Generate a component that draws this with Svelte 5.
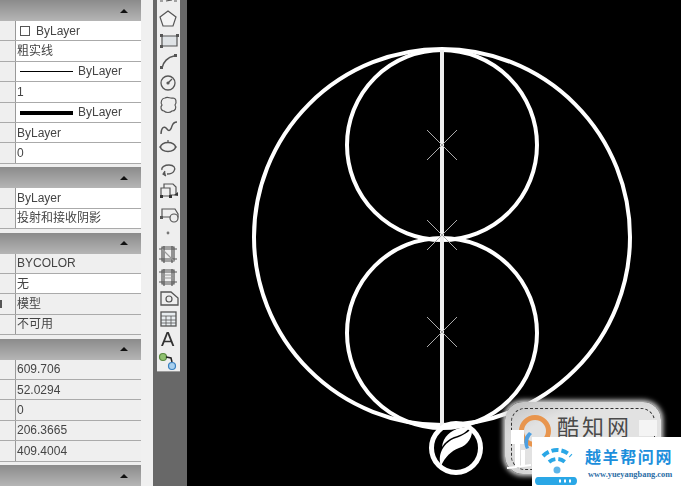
<script>
  const groups = [
    { rows: [
      { swatch: true, text: "ByLayer" },
      { text: "粗实线" },
      { line: 1, text: "ByLayer" },
      { text: "1" },
      { line: 4, text: "ByLayer" },
      { text: "ByLayer" },
      { text: "0" }
    ] },
    { rows: [{ text: "ByLayer" }, { text: "投射和接收阴影" }] },
    { rows: [
      { text: "BYCOLOR", grey: true },
      { text: "无" },
      { text: "模型", grey: true, mark: true },
      { text: "不可用", grey: true }
    ] },
    { rows: [
      { text: "609.706", grey: true },
      { text: "52.0294", grey: true },
      { text: "0", grey: true },
      { text: "206.3665", grey: true },
      { text: "409.4004", grey: true }
    ] },
    { rows: [] }
  ];
  const crosses = [[442, 145], [442, 235], [442, 332]];
</script>

<div class="screen">
  <aside class="palette">
    {#each groups as group}
      <section class="group">
        <header><span class="arrow"></span></header>
        {#each group.rows as row}
          <div class="row" class:grey={row.grey}>
            <div class="name">{#if row.mark}<i></i>{/if}</div>
            <div class="value">
              {#if row.swatch}<span class="swatch"></span>{/if}
              {#if row.line}<span class="sample" style:height="{row.line}px"></span>{/if}
              <span>{row.text}</span>
            </div>
          </div>
        {/each}
      </section>
    {/each}
  </aside>

  <div class="gutter"></div>

  <div class="dock">
    <nav class="toolbar">
      <svg width="22" height="372" viewBox="0 0 22 372" fill="none" stroke="#555" stroke-width="1.2">
        <path d="M3 1h3M9 1l6-1M17 1h3" />
        <polygon points="11,11 19,17 16,26 6,26 3,17" fill="#f4f4f4" />
        <path d="M5 36h15v10H5z" fill="#dfe3e6" /><path d="M3 34h3v3H3zM19 34h3v3h-3zM3 45h3v3H3z" fill="#555" stroke="none" />
        <path d="M5 68c1-6 6-11 12-12" stroke-width="1.5" /><path d="M3 66h3v3H3zM17 54h3v3h-3z" fill="#555" stroke="none" />
        <circle cx="11" cy="83" r="7" stroke-width="1.3" /><path d="M11 83l4-4" /><circle cx="11" cy="83" r="1" fill="#555" />
        <path d="M8 98c3-2 5 1 8 0 3 0 4 4 2 7 2 3 0 6-3 6-2 2-6 2-8 0-3 0-4-4-2-6-2-3 0-7 3-7z" />
        <path d="M4 134c0-6 3-9 6-5 2 3 4 1 5-3 1-3 3-4 5-4" stroke-width="1.4" />
        <ellipse cx="11" cy="147" rx="7.5" ry="4.5" stroke-width="1.5" /><path d="M2 147h2M18 147h2M11 142v-2" />
        <path d="M5 170c-1-3 3-5 7-5 5 0 7 3 5 6-1 2-4 3-7 3" stroke-width="1.3" /><path d="M8 171l-2 3 3 2" fill="#555" />
        <path d="M7 184h9l3 3v8H7z" /><path d="M4 188h9v8H4z" fill="#eee" /><path d="M3 195h3v3H3zM12 195h3v3h-3zM17 195l4-3v4z" fill="#333" stroke="none" />
        <path d="M5 209h13l3 5v3H5z" /><circle cx="17" cy="218" r="4" fill="#eee" /><path d="M3 216h3v3H3z" fill="#555" stroke="none" />
        <circle cx="11" cy="233" r="1.4" fill="#777" stroke="none" />
        <path d="M5 247h12v14H5zM2 249h18M2 259h18M7 246v17M15 246v17" /><path d="M5 249l12 12" stroke="#999" />
        <path d="M5 270h12v14H5zM2 272h18M2 282h18M7 269v17M15 269v17" /><path d="M5 275h12M5 278h12" stroke="#999" />
        <path d="M4 292h10l7 6v7H4z" stroke-width="1.3" /><circle cx="12" cy="299" r="3" />
        <rect x="4" y="312" width="15" height="14" fill="#e8edf0" stroke-width="1.3" /><path d="M4 316h15M4 320h15M4 323h15M9 316v10M14 316v10" stroke-width=".8" />
        <circle cx="6" cy="357" r="3.5" fill="#8fc06f" stroke="#5a8a40" /><path d="M9 357l5 1 1 4" stroke="#222" stroke-width="1.5" /><circle cx="15" cy="366" r="3.5" fill="#a9d0ee" stroke="#3a80c0" />
      </svg>
      <span class="glyph">A</span>
    </nav>
  </div>

  <main class="canvas">
    <svg width="494" height="486" viewBox="187 0 494 486" fill="none" stroke="#fff">
      <circle cx="442" cy="237" r="188" stroke-width="4" />
      <circle cx="442" cy="145" r="95" stroke-width="4" />
      <circle cx="442" cy="333" r="95" stroke-width="4" />
      <path d="M442 50v380" stroke="#eee" stroke-width="4" />
      {#each crosses as [x, y]}
        <path d="M{x - 15} {y - 15}l30 30M{x + 15} {y - 15}l-30 30" stroke="#aaa" stroke-width="1" />
      {/each}
      <circle cx="456" cy="448" r="24.5" stroke-width="5" />
      <path d="M441 466c-4-12 3-24 15-28 6-2 13-6 16-10 1 9-4 17-13 20-8 3-14 9-18 18z" fill="#fff" stroke="none" />
      <path d="M442 447c1-10 9-17 18-19 4-1 8-1 11-3-3 7-10 10-17 12-5 2-9 5-12 10z" fill="#fff" stroke="none" />
    </svg>

    <div class="stamp">
      <div class="stitch"></div>
      <span class="ring"></span>
      <span class="stamp-text">酷知网</span>
      <span class="stamp-cell"></span>
      <svg class="stamp-marks" width="40" height="50" viewBox="0 0 40 50" fill="#fff">
        <path d="M4 0h13v14H4zM8 14h5v23H8zM14 20h4v16h-4zM0 37l24-3v2L0 39z" />
        <path d="M22 2c-5 4-6 11-3 17l3-1c-2-5-1-10 3-14z" fill="#4d9fe0" />
      </svg>
    </div>

    <div class="brand">
      <svg class="brand-logo" width="42" height="46" viewBox="0 0 42 46" fill="none">
        <path d="M8 16c8-8 20-8 28 0M14 22c5-4 11-4 16 0" stroke="#2aa7e6" stroke-width="4" stroke-dasharray="7 3" />
        <circle cx="22" cy="30" r="3.5" fill="#5cb4e8" />
        <path d="M3 37h36c2 0 3 2 3 4s-1 4-3 4H3c-2 0-3-2-3-4s1-4 3-4z" fill="#2aa7e6" />
        <path d="M24 41h2M29 41h2M34 41h2" stroke="#fff" stroke-width="3" />
      </svg>
      <div class="brand-text">
        <div class="brand-name">越羊帮问网</div>
        <div class="brand-url">www.yueyangbang.com</div>
      </div>
    </div>
  </main>
</div>

<style>
  :global(body) {
    background: #000;
  }

  .screen {
    display: flex;
    width: 681px;
    height: 486px;
    overflow: hidden;
    font-family: "Liberation Sans", "Noto Sans CJK SC", sans-serif;
  }

  .palette {
    flex: none;
    width: 141px;
    display: flex;
    flex-direction: column;
    gap: 3.5px;
    background: #efefef;
    filter: blur(0.4px);
  }

  header {
    height: 21px;
    display: flex;
    align-items: center;
    justify-content: flex-end;
    padding-right: 13px;
    background: linear-gradient(#8b8b8b, #b5b5b5);
  }

  .arrow {
    width: 0;
    height: 0;
    border: 4px solid transparent;
    border-top: 0;
    border-bottom: 4px solid #111;
  }

  .row {
    height: 20.4px;
    display: flex;
    background: #fff;
    border-bottom: 1.5px solid #aaa;
    box-sizing: border-box;
    font-size: 12px;
    line-height: 19px;
    color: #444;
  }

  .row.grey {
    background: #efefef;
  }

  .name {
    width: 15px;
    background: #efefef;
    border-right: 1px solid #999;
    position: relative;
  }

  .name i {
    position: absolute;
    left: 0;
    top: 6px;
    width: 2px;
    height: 8px;
    background: #555;
  }

  .value {
    flex: 1;
    display: flex;
    align-items: center;
    padding: 1px 0 0 1px;
    white-space: nowrap;
  }

  .swatch {
    width: 8px;
    height: 8px;
    margin: 0 6px 0 3px;
    border: 1px solid #555;
  }

  .sample {
    width: 53px;
    margin: 0 5px 0 3px;
    background: #000;
  }

  .gutter {
    flex: none;
    width: 12px;
    background: #f0f0f0;
  }

  .dock {
    flex: none;
    width: 34px;
    box-sizing: border-box;
    padding: 0 7px 0 4px;
    background: #686868;
  }

  .toolbar {
    position: relative;
    height: 372px;
    background: #eeeeee;
    border-bottom: 1px solid #999;
    box-sizing: border-box;
    filter: blur(0.3px);
  }

  .toolbar svg {
    display: block;
  }

  .glyph {
    position: absolute;
    left: 4px;
    top: 328px;
    font-size: 20px;
    line-height: 22px;
    color: #333;
  }

  .canvas {
    flex: 1;
    position: relative;
    background: #000;
  }

  .canvas > svg {
    display: block;
  }

  .stamp {
    position: absolute;
    left: 318px;
    top: 402px;
    width: 156px;
    height: 72px;
    box-sizing: border-box;
    background: radial-gradient(ellipse at 70% 60%, #e2e2e2 60%, #bdbdbd 100%);
    border-radius: 18px;
    box-shadow: 0 0 5px 2px #ddd;
  }

  .stitch {
    position: absolute;
    inset: 6px 6px 4px 6px;
    border: 1px dashed #333;
    border-radius: 14px;
  }

  .ring {
    position: absolute;
    left: 14px;
    top: 13px;
    width: 32px;
    height: 32px;
    border: 5px solid #e8954e;
    border-radius: 50%;
    box-sizing: border-box;
  }

  .stamp-text {
    position: absolute;
    left: 52px;
    top: 13px;
    font-size: 22px;
    line-height: 26px;
    letter-spacing: 3px;
    color: #4a4a4a;
  }

  .stamp-cell {
    position: absolute;
    left: 134px;
    top: 18px;
    width: 18px;
    height: 16px;
    background: #f4f4f4;
  }

  .stamp-marks {
    position: absolute;
    left: 2px;
    top: 28px;
    display: block;
  }

  .brand {
    position: absolute;
    right: 0;
    bottom: 0;
    width: 149px;
    height: 49px;
    display: flex;
    align-items: flex-end;
    gap: 8px;
    padding-left: 3px;
    box-sizing: border-box;
    background: #fff;
  }

  .brand-logo {
    flex: none;
  }

  .brand-text {
    padding-bottom: 5px;
  }

  .brand-name {
    font-size: 16px;
    font-weight: bold;
    line-height: 23px;
    letter-spacing: 1.6px;
    color: #1d8fdc;
  }

  .brand-url {
    font-family: "Liberation Serif", serif;
    font-weight: bold;
    font-size: 8.4px;
    line-height: 12px;
    margin-left: 3px;
    color: #2c6ea6;
  }
</style>
